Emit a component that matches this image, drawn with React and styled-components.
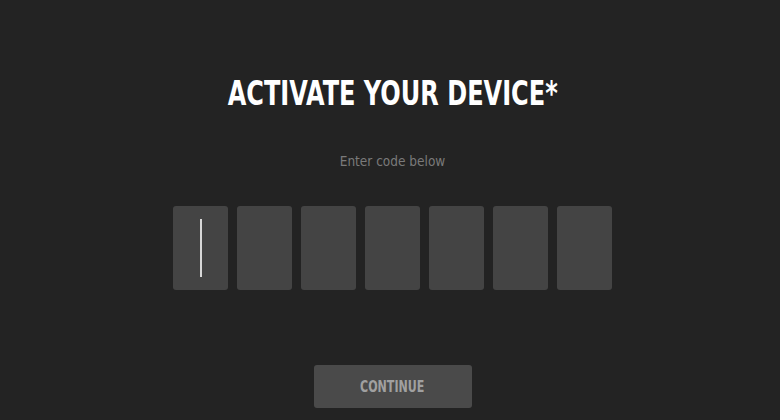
import React from "react";
import styled, { createGlobalStyle } from "styled-components";

const CODE_LENGTH = 7;

const GlobalStyle = createGlobalStyle`
  html, body {
    margin: 0;
    padding: 0;
    background: #232323;
  }
`;

const Root = styled.div`
  width: 780px;
  height: 420px;
  background: #232323;
  display: flex;
  flex-direction: column;
  align-items: center;
  font-family: "DejaVu Sans Condensed", "DejaVu Sans", sans-serif;
  box-sizing: border-box;
  padding-top: 74px;
  padding-left: 5px;
`;

const Title = styled.h1`
  margin: 0;
  color: #ffffff;
  font-size: 33px;
  line-height: 40px;
  font-weight: bold;
  transform: scaleX(0.81);
`;

const SubTitle = styled.div`
  margin-top: 39px;
  color: #7a7a7a;
  font-size: 13.5px;
  line-height: 16px;
`;

const CodeRow = styled.div`
  display: flex;
  gap: 9px;
  margin-top: 37px;
`;

const CodeBox = styled.div`
  width: 55px;
  height: 84px;
  background: #444444;
  border-radius: 3px;
  display: flex;
  align-items: center;
  justify-content: center;
`;

const Cursor = styled.div`
  width: 2px;
  height: 58px;
  background: #d8d8d8;
  margin-left: 1px;
`;

const ContinueButton = styled.button`
  margin-top: 75px;
  width: 158px;
  height: 43px;
  border: none;
  border-radius: 3px;
  background: #4a4a4a;
  color: #a0a0a0;
  font-family: inherit;
  font-size: 15px;
  font-weight: bold;
  cursor: pointer;
`;

const ButtonLabel = styled.span`
  display: inline-block;
  transform: scaleX(0.82);
`;

const App = () => {
  return (
    <Root>
      <GlobalStyle />
      <Title>ACTIVATE YOUR DEVICE*</Title>
      <SubTitle>Enter code below</SubTitle>
      <CodeRow>
        {Array.from({ length: CODE_LENGTH }).map((_, i) => (
          <CodeBox key={i}>{i === 0 && <Cursor />}</CodeBox>
        ))}
      </CodeRow>
      <ContinueButton>
        <ButtonLabel>CONTINUE</ButtonLabel>
      </ContinueButton>
    </Root>
  );
};

export default App;
